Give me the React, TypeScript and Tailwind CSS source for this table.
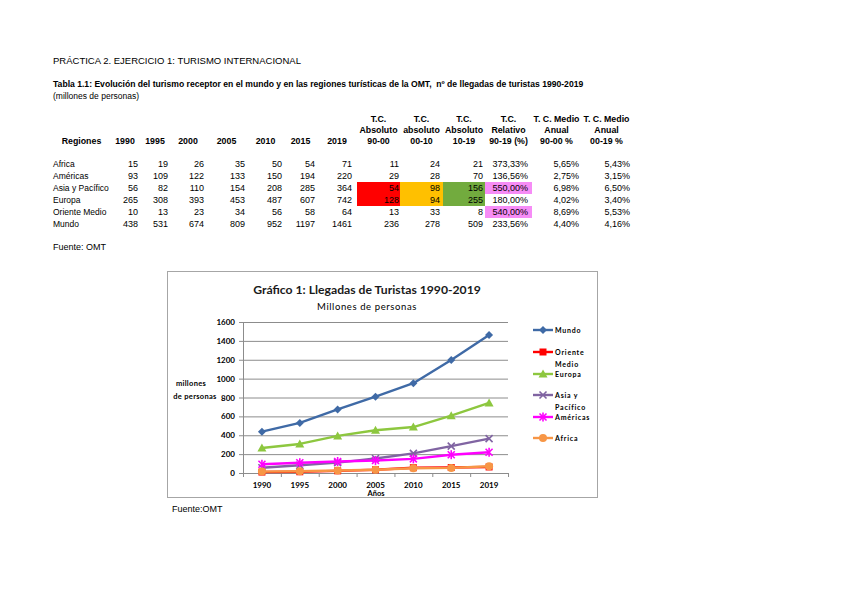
import React from "react";

type Row = {
  region: string;
  years: number[];
  abs: string[];
  rel: string;
  medio: string[];
  hl?: (string | null)[];
};

const rows: Row[] = [
  { region: "Africa", years: [15, 19, 26, 35, 50, 54, 71], abs: ["11", "24", "21"], rel: "373,33%", medio: ["5,65%", "5,43%"] },
  { region: "Américas", years: [93, 109, 122, 133, 150, 194, 220], abs: ["29", "28", "70"], rel: "136,56%", medio: ["2,75%", "3,15%"] },
  {
    region: "Asia y Pacífico",
    years: [56, 82, 110, 154, 208, 285, 364],
    abs: ["54", "98", "156"],
    rel: "550,00%",
    medio: ["6,98%", "6,50%"],
    hl: ["bg-[#ff0000]", "bg-[#ffc000]", "bg-[#72ab3e]", "bg-[#f68cf6]"],
  },
  {
    region: "Europa",
    years: [265, 308, 393, 453, 487, 607, 742],
    abs: ["128", "94", "255"],
    rel: "180,00%",
    medio: ["4,02%", "3,40%"],
    hl: ["bg-[#ff0000]", "bg-[#ffc000]", "bg-[#72ab3e]", null],
  },
  {
    region: "Oriente Medio",
    years: [10, 13, 23, 34, 56, 58, 64],
    abs: ["13", "33", "8"],
    rel: "540,00%",
    medio: ["8,69%", "5,53%"],
    hl: [null, null, null, "bg-[#f68cf6]"],
  },
  { region: "Mundo", years: [438, 531, 674, 809, 952, 1197, 1461], abs: ["236", "278", "509"], rel: "233,56%", medio: ["4,40%", "4,16%"] },
];

const yearCols = ["1990", "1995", "2000", "2005", "2010", "2015", "2019"];
// column grid: label + 7 years + 3 abs + rel + 2 medio
const gridCols =
  "grid grid-cols-[57px_30px_30px_36px_41px_37px_33px_40px_43px_43px_42px_47px_49px_51px]";
const yearPad = ["pr-[2px]", "pr-[2px]", "pr-[2px]", "pr-[2px]", "pr-[2px]", "pr-[2px]", "pr-[5px]"];
const absPad = ["pr-[1px]", "pr-[3px]", "pr-[2px]"];

const series = [
  { name: ["Mundo"], color: "#3f6aa6", marker: "diamond", data: [438, 531, 674, 809, 952, 1197, 1461] },
  { name: ["Oriente", "Medio"], color: "#ff0000", marker: "square", data: [10, 13, 23, 34, 56, 58, 64] },
  { name: ["Europa"], color: "#8dc73f", marker: "triangle", data: [265, 308, 393, 453, 487, 607, 742] },
  { name: ["Asia y", "Pacífico"], color: "#8064a2", marker: "x", data: [56, 82, 110, 154, 208, 285, 364] },
  { name: ["Américas"], color: "#ff00ff", marker: "star", data: [93, 109, 122, 133, 150, 194, 220] },
  { name: ["Africa"], color: "#f79646", marker: "circle", data: [15, 19, 26, 35, 50, 54, 71] },
];

const legendY = [17, 39, 61, 82, 104, 125];

const px = (i: number) => 75 + 37.86 * (i + 0.5);
const py = (v: number) => 160 - (v * 151) / 1600;

function Marker({ type, x, y, color }: { type: string; x: number; y: number; color: string }) {
  if (type === "diamond")
    return <polygon points={`${x},${y - 4} ${x + 4},${y} ${x},${y + 4} ${x - 4},${y}`} fill={color} />;
  if (type === "square") return <rect x={x - 3.5} y={y - 3.5} width={7} height={7} fill={color} />;
  if (type === "triangle")
    return <polygon points={`${x},${y - 4.5} ${x + 4.5},${y + 3.5} ${x - 4.5},${y + 3.5}`} fill={color} />;
  if (type === "circle") return <circle cx={x} cy={y} r={4} fill={color} />;
  if (type === "x")
    return (
      <g stroke={color} strokeWidth={1.6}>
        <line x1={x - 3.5} y1={y - 3.5} x2={x + 3.5} y2={y + 3.5} />
        <line x1={x - 3.5} y1={y + 3.5} x2={x + 3.5} y2={y - 3.5} />
      </g>
    );
  return (
    <g stroke={color} strokeWidth={1.6}>
      <line x1={x - 3.5} y1={y - 3.5} x2={x + 3.5} y2={y + 3.5} />
      <line x1={x - 3.5} y1={y + 3.5} x2={x + 3.5} y2={y - 3.5} />
      <line x1={x} y1={y - 4.5} x2={x} y2={y + 4.5} />
    </g>
  );
}

function Chart() {
  const ticks = [0, 200, 400, 600, 800, 1000, 1200, 1400, 1600];
  return (
    <svg width={429} height={184} className="block" style={{ fontFamily: "Lato, 'Open Sans', sans-serif" }}>
      {ticks.map((t) => (
        <g key={t}>
          <line x1={71} x2={340} y1={py(t) + 0.5} y2={py(t) + 0.5} stroke="#8c8c8c" strokeWidth={1} />
          <text x={67} y={py(t) + 3} fontSize={8} fontWeight={700} textAnchor="end" fill="#000">
            {t}
          </text>
        </g>
      ))}
      <line x1={75.5} x2={75.5} y1={py(1600)} y2={160.5} stroke="#8c8c8c" />
      {Array.from({ length: 8 }).map((_, k) => (
        <line key={k} x1={75.5 + k * 37.86} x2={75.5 + k * 37.86} y1={160} y2={164} stroke="#8c8c8c" />
      ))}
      {yearCols.map((y, i) => (
        <text key={y} x={px(i)} y={175} fontSize={8} fontWeight={700} textAnchor="middle">
          {y}
        </text>
      ))}
      <text x={208} y={183} fontSize={7.5} fontWeight={700} textAnchor="middle">
        Años
      </text>
      <text x={23} y={73} fontSize={7.5} fontWeight={700} textAnchor="middle" letterSpacing={0.3}>
        millones
      </text>
      <text x={27} y={86} fontSize={7.5} fontWeight={700} textAnchor="middle" letterSpacing={0.3}>
        de personas
      </text>

      {series.map((s) => (
        <g key={s.name[0]}>
          <polyline
            points={s.data.map((v, i) => `${px(i)},${py(v)}`).join(" ")}
            fill="none"
            stroke={s.color}
            strokeWidth={2.4}
            strokeLinejoin="round"
          />
          {s.data.map((v, i) => (
            <Marker key={i} type={s.marker} x={px(i)} y={py(v)} color={s.color} />
          ))}
        </g>
      ))}

      {series.map((s, k) => (
        <g key={s.name[0] + "l"}>
          <line x1={365} x2={385} y1={legendY[k]} y2={legendY[k]} stroke={s.color} strokeWidth={2.4} />
          <Marker type={s.marker} x={375} y={legendY[k]} color={s.color} />
          {s.name.map((n, j) => (
            <text key={n} x={387} y={legendY[k] + 3 + j * 12} fontSize={7} fontWeight={700} letterSpacing={0.8}>
              {n}
            </text>
          ))}
        </g>
      ))}
    </svg>
  );
}

export default function App() {
  return (
    <div
      className="w-[848px] h-[599px] bg-white text-black pl-[53px] pt-[55px]"
      style={{ fontFamily: "'Liberation Sans', Arial, sans-serif" }}
    >
      <div className="text-[9.5px] leading-[12px]">PRÁCTICA 2. EJERCICIO 1: TURISMO INTERNACIONAL</div>
      <div className="mt-[11px] text-[8.6px] leading-[12px] font-bold whitespace-nowrap">
        Tabla 1.1: Evolución del turismo receptor en el mundo y en las regiones turísticas de la OMT,&nbsp; nº de llegadas de
        turistas 1990-2019
      </div>
      <div className="text-[8.5px] leading-[12px]">(millones de personas)</div>

      <div className={`${gridCols} mt-[12px] text-[8.8px] font-bold leading-[11px] text-center whitespace-nowrap`}>
        <div className="flex flex-col justify-end">Regiones</div>
        {yearCols.map((y) => (
          <div key={y} className="flex flex-col justify-end">
            {y}
          </div>
        ))}
        <div>T.C.<br />Absoluto<br />90-00</div>
        <div>T.C.<br />absoluto<br />00-10</div>
        <div>T.C.<br />Absoluto<br />10-19</div>
        <div>T.C.<br />Relativo<br />90-19 (%)</div>
        <div>T. C. Medio<br />Anual<br />90-00 %</div>
        <div>T. C. Medio<br />Anual<br />00-19 %</div>
      </div>

      <div className="mt-[11px] text-[9px] leading-[12px]">
        {rows.map((r) => (
          <div key={r.region} className={`${gridCols} h-[12px]`}>
            <div className="text-[8.5px] whitespace-nowrap">{r.region}</div>
            {r.years.map((v, i) => (
              <div key={i} className={`text-right ${yearPad[i]}`}>
                {v}
              </div>
            ))}
            {r.abs.map((v, i) => (
              <div key={i} className={`text-right ${absPad[i]} ${r.hl?.[i] ?? ""}`}>
                {v}
              </div>
            ))}
            <div className={`text-right pr-[4px] ${r.hl?.[3] ?? ""}`}>{r.rel}</div>
            <div className="text-right pr-[2px]">{r.medio[0]}</div>
            <div className="text-right pr-[2px]">{r.medio[1]}</div>
          </div>
        ))}
      </div>

      <div className="mt-[11px] text-[9px] leading-[12px]">Fuente: OMT</div>

      <div className="mt-[18px] ml-[114px] w-[431px] h-[227px] border border-[#a6a6a6]">
        <div
          className="pt-[10px] pr-[31px] text-center text-[12.2px] leading-[16px] font-bold text-[#1a1a1a]"
          style={{ fontFamily: "Lato, 'Open Sans', sans-serif" }}
        >
          Gráfico 1: Llegadas de Turistas 1990-2019
        </div>
        <div
          className="mt-[3px] pr-[31px] text-center text-[9.5px] leading-[12px] tracking-[0.6px]"
          style={{ fontFamily: "Lato, 'Open Sans', sans-serif" }}
        >
          Millones de personas
        </div>
        <Chart />
      </div>

      <div className="mt-[5px] ml-[119px] text-[9px] leading-[12px]">Fuente:OMT</div>
    </div>
  );
}
